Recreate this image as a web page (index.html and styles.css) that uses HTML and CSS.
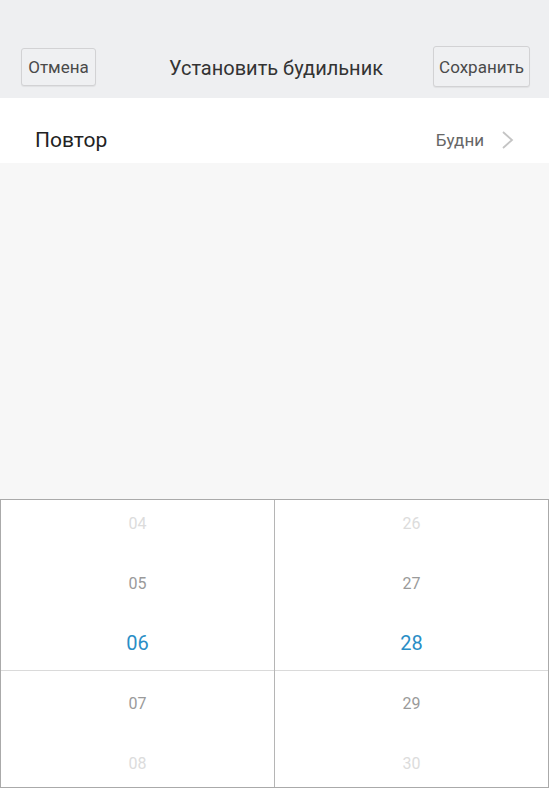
FILE: index.html
```html
<!DOCTYPE html>
<html lang="ru">
<head>
<meta charset="utf-8">
<link rel="stylesheet" href="styles.css">
</head>
<body>
<div class="screen">
  <header class="topbar">
    <button class="btn btn-cancel">Отмена</button>
    <div class="title">Установить будильник</div>
    <button class="btn btn-save">Сохранить</button>
  </header>
  <div class="row">
    <span class="row-label">Повтор</span>
    <span class="row-value">Будни
      <svg class="chev" width="13" height="20" viewBox="0 0 13 20"><path d="M2 2 L11 10 L2 18" fill="none" stroke="#c4c4c4" stroke-width="1.8"/></svg>
    </span>
  </div>
  <div class="spacer"></div>
  <div class="picker">
    <div class="col col-left">
      <div class="item far">04</div>
      <div class="item near">05</div>
      <div class="item sel">06</div>
      <div class="item near after">07</div>
      <div class="item far">08</div>
    </div>
    <div class="col">
      <div class="item far">26</div>
      <div class="item near">27</div>
      <div class="item sel">28</div>
      <div class="item near after">29</div>
      <div class="item far">30</div>
    </div>
  </div>
</div>
</body>
</html>
```

FILE: styles.css
```css
html, body {
  margin: 0;
  padding: 0;
  background: #f7f7f7;
}
.screen {
  width: 549px;
  height: 788px;
  overflow: hidden;
  display: flex;
  flex-direction: column;
  font-family: Roboto, "Noto Sans", "Liberation Sans", sans-serif;
}
.topbar {
  height: 98px;
  flex: none;
  background: #eeeff1;
  position: relative;
  display: flex;
  align-items: center;
  justify-content: center;
}
.title {
  font-size: 20px;
  color: #333;
  margin-top: 38px;
  margin-left: 3px;
}
.btn {
  position: absolute;
  font-family: inherit;
  font-size: 17px;
  color: #4a4a4a;
  background: #eff0f2;
  border: 1px solid #d2d2d4;
  border-radius: 3px;
  box-shadow: 0 1px 1px rgba(0,0,0,0.06);
  padding: 0;
}
.btn-cancel {
  left: 21px;
  top: 48px;
  width: 75px;
  height: 38px;
}
.btn-save {
  left: 433px;
  top: 46px;
  width: 97px;
  height: 41px;
}
.row {
  height: 65px;
  box-sizing: border-box;
  flex: none;
  background: #fff;
  display: flex;
  align-items: center;
  justify-content: space-between;
  padding: 18px 34px 0 35px;
}
.row-label {
  font-size: 21px;
  color: #222;
}
.row-value {
  font-size: 17px;
  color: #666;
  display: flex;
  align-items: center;
  gap: 17px;
  margin-right: 1px;
}
.chev {
  display: block;
}
.spacer {
  height: 336px;
  flex: none;
  background: #f7f7f7;
}
.picker {
  flex: none;
  height: 287px;
  background: #fff;
  border: 1px solid #aaa;
  display: grid;
  grid-template-columns: 274px 1fr;
  overflow: hidden;
}
.col {
  display: flex;
  flex-direction: column;
  margin-top: -7px;
}
.col-left {
  border-right: 1px solid #b5b5b5;
}
.item {
  height: 60px;
  flex: none;
  display: flex;
  align-items: center;
  justify-content: center;
  font-size: 16px;
}
.far { color: #dcdcdc; }
.near { color: #9a9a9a; }
.sel {
  color: #2a8ec6;
  font-size: 20px;
  padding-top: 3px;
  box-sizing: border-box;
  height: 58px;
  border-bottom: 1px solid #dadada;
}
.after {
  height: 62px;
  padding-top: 2px;
  box-sizing: border-box;
}
```
